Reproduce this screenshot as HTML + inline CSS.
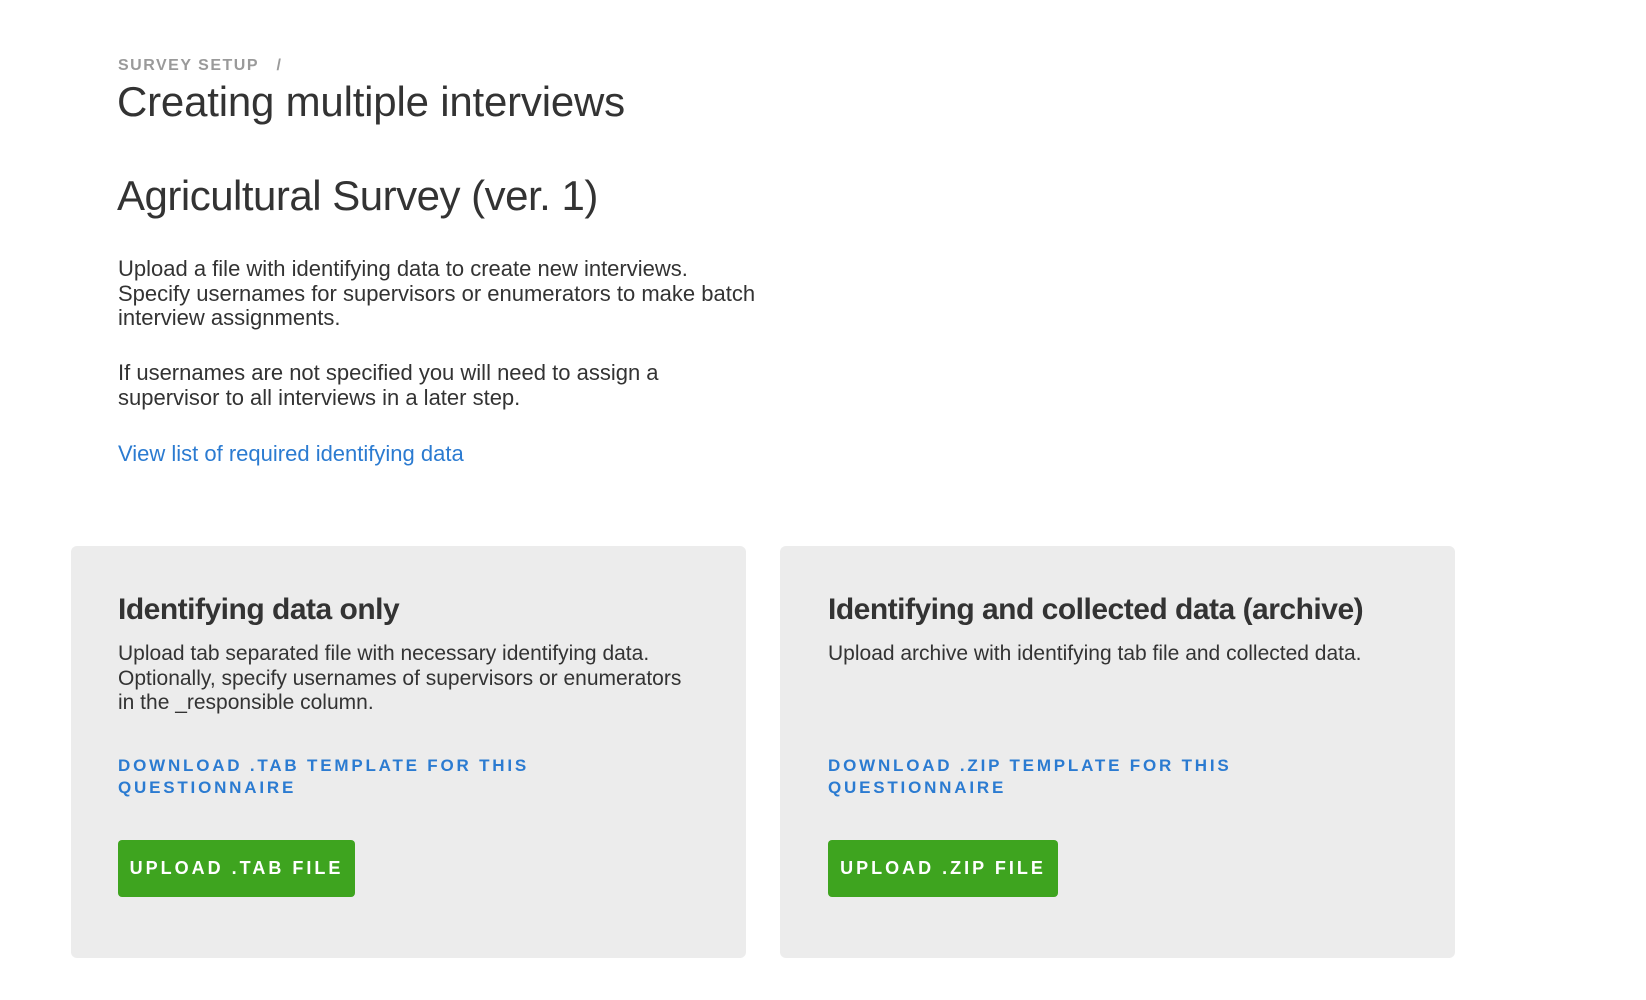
<!DOCTYPE html>
<html><head><meta charset="utf-8"><style>
body{margin:0;background:#fff;font-family:"Liberation Sans",Arial,sans-serif;color:#333;width:1646px;height:1000px;position:relative;overflow:hidden}
.a{position:absolute;white-space:nowrap}
.bc{left:118px;top:57px;font-size:16px;font-weight:bold;color:#9a9a9a;letter-spacing:1.5px}
.h1{left:117px;top:78px;font-size:42px;color:#333;letter-spacing:-0.2px}
.h2{left:117px;top:172px;font-size:42px;color:#333;letter-spacing:-0.5px}
.p{left:118px;font-size:22px;line-height:24.5px;color:#333}
.link{color:#2b7bd1}
.card{position:absolute;top:546px;height:412px;background:#ececec;border-radius:6px}
.ch{font-size:30px;font-weight:bold;color:#333;letter-spacing:-0.5px}
.ct{font-size:21px;line-height:24.5px;color:#333}
.dl{font-size:17px;font-weight:bold;color:#2b7bd1;letter-spacing:2.8px;line-height:22px}
.btn{position:absolute;top:294px;height:57px;background:#3ea41f;border-radius:4px;color:#fff;font-weight:bold;font-size:18px;letter-spacing:3px;line-height:57px;text-align:center}
</style></head><body>
<div class="a bc">SURVEY SETUP &nbsp; /</div>
<div class="a h1">Creating multiple interviews</div>
<div class="a h2">Agricultural Survey (ver. 1)</div>
<div class="a p" style="top:257px">Upload a file with identifying data to create new interviews.<br>Specify usernames for supervisors or enumerators to make batch<br>interview assignments.</div>
<div class="a p" style="top:361px">If usernames are not specified you will need to assign a<br>supervisor to all interviews in a later step.</div>
<div class="a p link" style="top:442px">View list of required identifying data</div>

<div class="card" style="left:71px;width:675px">
 <div class="a ch" style="left:47px;top:47px">Identifying data only</div>
 <div class="a ct" style="left:47px;top:96px">Upload tab separated file with necessary identifying data.<br>Optionally, specify usernames of supervisors or enumerators<br>in the _responsible column.</div>
 <div class="a dl" style="left:47px;top:209px">DOWNLOAD .TAB TEMPLATE FOR THIS<br>QUESTIONNAIRE</div>
 <div class="btn" style="left:47px;width:237px">UPLOAD .TAB FILE</div>
</div>
<div class="card" style="left:780px;width:675px">
 <div class="a ch" style="left:48px;top:47px">Identifying and collected data (archive)</div>
 <div class="a ct" style="left:48px;top:96px">Upload archive with identifying tab file and collected data.</div>
 <div class="a dl" style="left:48px;top:209px">DOWNLOAD .ZIP TEMPLATE FOR THIS<br>QUESTIONNAIRE</div>
 <div class="btn" style="left:48px;width:230px">UPLOAD .ZIP FILE</div>
</div>
</body></html>
